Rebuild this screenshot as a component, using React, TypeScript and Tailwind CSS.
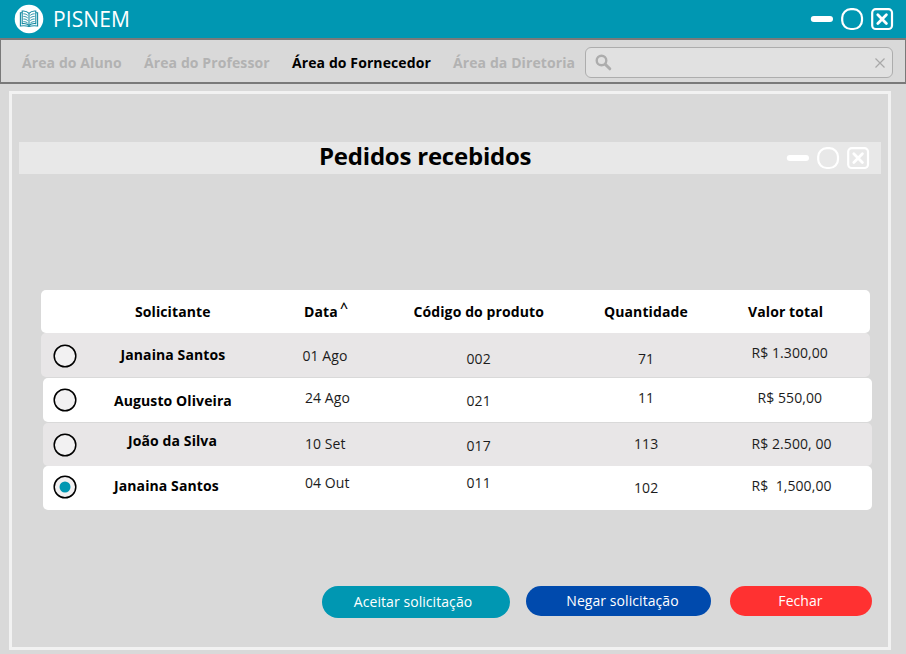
import React from "react";

function WindowControls() {
  return (
    <svg width="84" height="24" viewBox="0 0 84 24" fill="none" stroke="#fff" className="shrink-0">
      <path d="M3.8 12H20" strokeWidth="6" strokeLinecap="round" />
      <rect x="32.2" y="2.2" width="19.8" height="19.8" rx="8.6" strokeWidth="2.2" />
      <rect x="62.2" y="2.2" width="19.8" height="19.8" rx="3.6" strokeWidth="2.2" />
      <path d="M67.8 7.8l8.6 8.6M76.4 7.8l-8.6 8.6" strokeWidth="2.8" strokeLinecap="round" />
    </svg>
  );
}

function BookLogo() {
  return (
    <svg width="30" height="30" viewBox="0 0 30 30" fill="none" stroke="#168ba3" className="shrink-0">
      <circle cx="15" cy="15" r="14.3" fill="#fff" stroke="none" />
      <path strokeWidth="1.1" d="M15 9.4C13 7.3 10.5 6.8 8.2 7.1V19.6C10.8 19.2 13 19.7 15 21.5 17 19.7 19.2 19.2 21.8 19.6V7.1C19.5 6.8 17 7.3 15 9.4ZM15 9.4V21.5" />
      <path strokeWidth="1.1" d="M8.2 8.8H6.4v13.2c3-.5 6-.4 8.6.6 2.6-1 5.6-1.1 8.6-.6V8.8h-1.8" />
      <path strokeWidth="1" d="M9.4 9.8c1.7 0 3 .5 4.3 1.5M9.4 12.4c1.7 0 3 .5 4.3 1.5M9.4 15c1.7 0 3 .5 4.3 1.5M9.4 17.6c1.7 0 3 .5 4.3 1.5M20.6 9.8c-1.7 0-3 .5-4.3 1.5M20.6 12.4c-1.7 0-3 .5-4.3 1.5M20.6 15c-1.7 0-3 .5-4.3 1.5M20.6 17.6c-1.7 0-3 .5-4.3 1.5" />
    </svg>
  );
}

type Cell = { text: string; className: string };
type Order = {
  row: string;
  radio: string;
  selected?: boolean;
  name: Cell;
  date: Cell;
  code: Cell;
  quantity: Cell;
  total: Cell;
};

const orders: Order[] = [
  {
    row: "h-11 bg-[#e8e6e7]",
    radio: "w-[50px] pl-3 pt-[11px]",
    name: { text: "Janaina Santos", className: "pl-[29.5px] pt-3" },
    date: { text: "01 Ago", className: "pl-[11.5px] pt-[13px]" },
    code: { text: "002", className: "pl-[75.5px] pt-4" },
    quantity: { text: "71", className: "pl-[57px] pt-4" },
    total: { text: "R$ 1.300,00", className: "pl-[50.5px] pt-2.5" },
  },
  {
    row: "ml-0.5 mt-px h-11 bg-white",
    radio: "w-12 pl-2.5 pt-2.5",
    name: { text: "Augusto Oliveira", className: "pl-[23px] pt-[13px]" },
    date: { text: "24 Ago", className: "pl-[14px] pt-2.5" },
    code: { text: "021", className: "pl-[75.5px] pt-[13px]" },
    quantity: { text: "11", className: "pl-[57px] pt-2.5" },
    total: { text: "R$ 550,00", className: "pl-[56.5px] pt-2.5" },
  },
  {
    row: "ml-0.5 mt-px h-[43px] bg-[#e8e6e7]",
    radio: "w-12 pl-2.5 pt-2.5",
    name: { text: "João da Silva", className: "pl-[37px] pt-2" },
    date: { text: "10 Set", className: "pl-[14px] pt-[11px]" },
    code: { text: "017", className: "pl-[75.5px] pt-[13px]" },
    quantity: { text: "113", className: "pl-[53px] pt-[11px]" },
    total: { text: "R$ 2.500, 00", className: "pl-[50.5px] pt-[11px]" },
  },
  {
    row: "ml-0.5 h-11 bg-white",
    radio: "w-12 pl-[9.5px] pt-[8.5px]",
    selected: true,
    name: { text: "Janaina Santos", className: "pl-[23px] pt-2.5" },
    date: { text: "04 Out", className: "pl-[14px] pt-[7px]" },
    code: { text: "011", className: "pl-[75.5px] pt-[7px]" },
    quantity: { text: "102", className: "pl-[53px] pt-3" },
    total: { text: "R$  1,500,00", className: "pl-[50.5px] pt-2.5" },
  },
];

function OrderRow({ order }: { order: Order }) {
  return (
    <div className={`flex w-[829px] rounded-[5px] tracking-[0.07px] text-[#1c1c1c] ${order.row}`}>
      <div className={order.radio}>
        <svg width="24" height="24" viewBox="0 0 24 24">
          <circle cx="12" cy="12" r="10.8" fill="#f2f1f2" stroke="#000" strokeWidth="1.5" />
          {order.selected && <circle cx="12" cy="12" r="5.5" fill="#0097b2" />}
        </svg>
      </div>
      <div className={`w-[200px] font-bold tracking-[0.1px] text-black ${order.name.className}`}>{order.name.text}</div>
      <div className={`w-[100px] ${order.date.className}`}>{order.date.text}</div>
      <div className={`w-[190px] ${order.code.className}`}>{order.code.text}</div>
      <div className={`w-[120px] ${order.quantity.className}`}>{order.quantity.text}</div>
      <div className={order.total.className}>{order.total.text}</div>
    </div>
  );
}

export default function App() {
  return (
    <div className="flex h-[654px] w-[906px] flex-col overflow-hidden whitespace-pre bg-[#d9d9d9] font-['Open_Sans',sans-serif] text-sm leading-5 text-black">
      <header className="flex h-[38px] shrink-0 items-center bg-[#0097b2] pl-3.5 pr-3">
        <BookLogo />
        <h1 className="ml-[9px] text-[21px] leading-7 tracking-[0.1px] text-white">PISNEM</h1>
        <div className="ml-auto">
          <WindowControls />
        </div>
      </header>

      <nav className="flex h-[46px] shrink-0 items-center border-2 border-[#797979] border-l-[1px] border-r-[1px] pt-[3px] font-bold tracking-[0.1px] text-[#b2b2b2]">
        <a className="ml-[21px] w-[122px]">Área do Aluno</a>
        <a className="w-[148px]">Área do Professor</a>
        <a className="w-[161px] text-black">Área do Fornecedor</a>
        <a className="w-[132px]">Área da Diretoria</a>
        <div className="flex h-[31px] w-[308px] items-center justify-between rounded-md border border-[#adadad] bg-[#e1e1e1] pl-[9px] pr-[7px]">
          <svg width="17" height="17" viewBox="0 0 17 17" fill="none" stroke="#adadad">
            <circle cx="6.5" cy="6.5" r="4.8" strokeWidth="2.4" />
            <path d="M10.2 10.2l4.6 4.6" strokeWidth="3" strokeLinecap="round" />
          </svg>
          <svg width="10" height="10" viewBox="0 0 10 10" fill="none" stroke="#a8a8a8" strokeWidth="1.2">
            <path d="M.5.5l9 9M9.5.5l-9 9" />
          </svg>
        </div>
      </nav>

      <main className="ml-[9px] mt-[7px] h-[559px] w-[882px] shrink-0 border-[3px] border-[#f2f2f2]">
        <div className="ml-[7px] mt-[48px] flex h-[32px] w-[862px] bg-[#e8e8e8]">
          <h2 className="-mt-px w-[767px] pl-[300px] text-2xl leading-[30px] font-bold tracking-[-0.22px]">Pedidos recebidos</h2>
          <div className="pt-1">
            <WindowControls />
          </div>
        </div>

        <section className="ml-[29px] mt-[116px]">
          <div className="flex h-[43px] w-[829px] rounded-[5px] bg-white pt-3 font-bold tracking-[0.1px]">
            <div className="w-[250px] pl-[94px]">Solicitante</div>
            <div className="flex w-[100px] pl-[13px]">
              <span className="w-[36px]">Data</span>
              <span className="-mt-1 font-semibold">^</span>
            </div>
            <div className="w-[190px] pl-[22.5px]">Código do produto</div>
            <div className="w-[120px] pl-[23px]">Quantidade</div>
            <div className="pl-[47px]">Valor total</div>
          </div>
          {orders.map((order, i) => (
            <OrderRow key={i} order={order} />
          ))}
        </section>

        <div className="ml-[310px] mt-[76px] flex items-start tracking-[0.07px] text-white">
          <button className="h-8 w-[188px] rounded-full bg-[#0097b2] pr-1.5">Aceitar solicitação</button>
          <button className="ml-4 h-[30px] w-[185px] rounded-full bg-[#004aad] pl-2">Negar solicitação</button>
          <button className="ml-[18.5px] h-[30px] w-[142px] rounded-full bg-[#ff3131]">Fechar</button>
        </div>
      </main>
    </div>
  );
}
